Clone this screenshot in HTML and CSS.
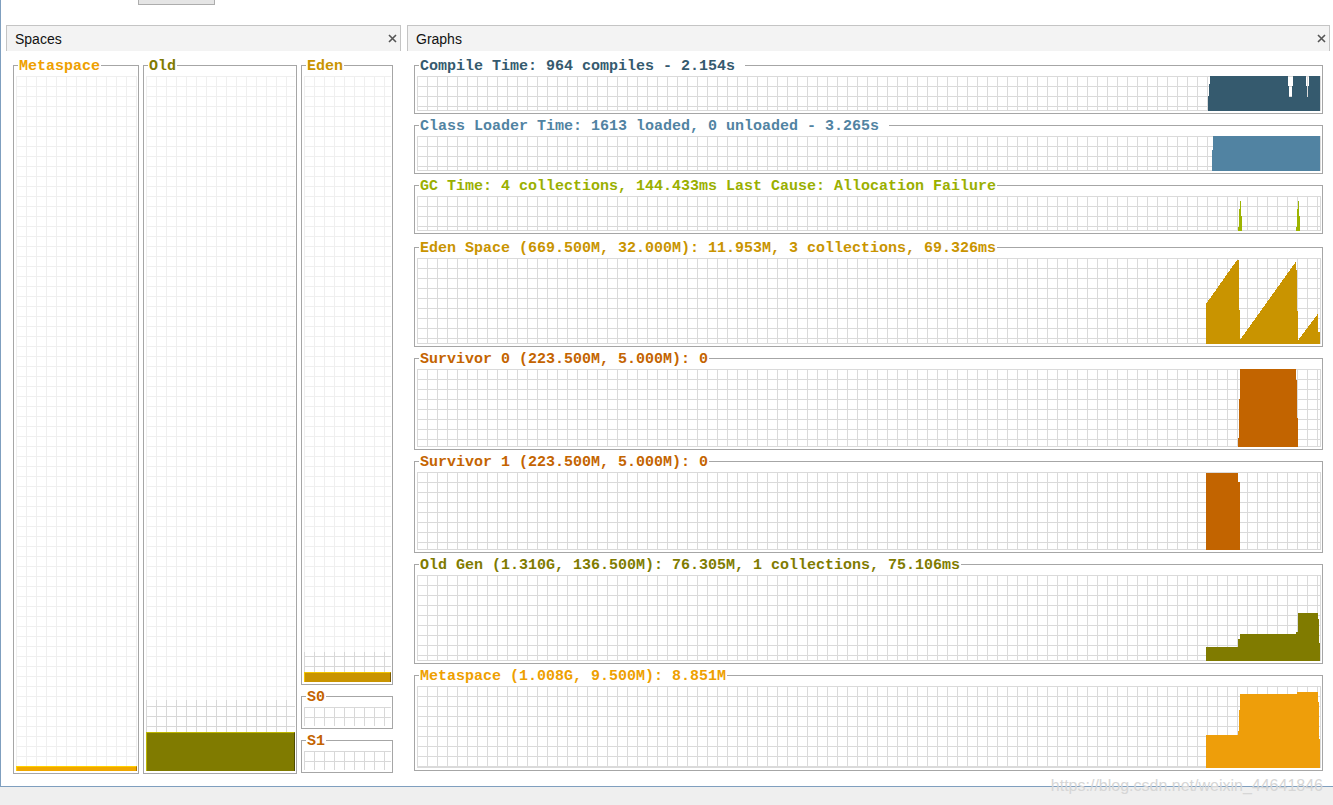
FILE: index.html
```html
<!DOCTYPE html>
<html>
<head>
<meta charset="utf-8">
<title>Visual GC</title>
<link rel="stylesheet" href="styles.css">
</head>
<body>
<div class="window">
  <div class="toolbar"><div class="tool-btn"></div></div>
  <div class="panels">
    <section class="panel panel-spaces">
      <header class="tab-head">
        <span class="tab-title">Spaces</span>
        <svg class="close" width="9" height="9" viewBox="0 0 9 9"><path d="M1 1L8 8M8 1L1 8" stroke="#555" stroke-width="1.6" fill="none"/></svg>
      </header>
      <div class="panel-body spaces-body">
        <fieldset class="box col-meta">
          <legend class="t-meta">Metaspace</legend>
          <div class="splot splot-tall" style="--commit:5px"><div class="used used-meta" style="height:5px"></div></div>
        </fieldset>
        <fieldset class="box col-old">
          <legend class="t-old">Old</legend>
          <div class="splot splot-tall" style="--commit:71px"><div class="used used-old" style="height:39px"></div></div>
        </fieldset>
        <div class="space-stack">
          <fieldset class="box">
            <legend class="t-eden">Eden</legend>
            <div class="splot splot-eden" style="--commit:30px"><div class="used used-eden" style="height:10px"></div></div>
          </fieldset>
          <fieldset class="box">
            <legend class="t-surv">S0</legend>
            <div class="splot splot-surv" style="--commit:100%"></div>
          </fieldset>
          <fieldset class="box">
            <legend class="t-surv">S1</legend>
            <div class="splot splot-surv" style="--commit:100%"></div>
          </fieldset>
        </div>
      </div>
    </section>

    <section class="panel panel-graphs">
      <header class="tab-head">
        <span class="tab-title">Graphs</span>
        <svg class="close" width="9" height="9" viewBox="0 0 9 9"><path d="M1 1L8 8M8 1L1 8" stroke="#555" stroke-width="1.6" fill="none"/></svg>
      </header>
      <div class="panel-body graphs-body">
        <fieldset class="box">
          <legend class="t-compile">Compile Time: 964 compiles - 2.154s </legend>
          <div class="gplot gp-35">
            <svg class="data" viewBox="0 0 904 35" preserveAspectRatio="none" shape-rendering="crispEdges"><polygon fill="#355a6e" points="791,35 791,20 792,20 792,8 793,8 793,0 871,0 871,10 872,10 872,21 875,21 875,10 876,10 876,0 889,0 889,10 890,10 890,21 891,21 891,10 892,10 892,0 903,0 903,35"/></svg>
          </div>
        </fieldset>
        <fieldset class="box">
          <legend class="t-class">Class Loader Time: 1613 loaded, 0 unloaded - 3.265s </legend>
          <div class="gplot gp-35">
            <svg class="data" viewBox="0 0 904 35" preserveAspectRatio="none" shape-rendering="crispEdges"><polygon fill="#5183a2" points="795,35 795,14 796,14 796,0 903,0 903,35"/></svg>
          </div>
        </fieldset>
        <fieldset class="box">
          <legend class="t-gc">GC Time: 4 collections, 144.433ms Last Cause: Allocation Failure</legend>
          <div class="gplot gp-35">
            <svg class="data" viewBox="0 0 904 35" preserveAspectRatio="none" shape-rendering="crispEdges">
              <polygon fill="#9db400" points="821,35 821,31 822,31 822,13 823,13 823,5 824,5 824,20 825,20 825,35"/>
              <polygon fill="#9db400" points="879,35 879,31 880,31 880,13 881,13 881,5 882,5 882,20 883,20 883,35"/>
            </svg>
          </div>
        </fieldset>
        <fieldset class="box graph-gap">
          <legend class="t-eden">Eden Space (669.500M, 32.000M): 11.953M, 3 collections, 69.326ms</legend>
          <div class="gplot gp-86">
            <svg class="data" viewBox="0 0 904 86" preserveAspectRatio="none" shape-rendering="crispEdges"><polygon fill="#c99400" points="789,86 789,46 820,2 822,2 822,52 823,52 823,82 878.7,4 878.7,12 879.7,12 879.7,53 881.3,53 881.3,82 900.7,56 900.7,74 902.5,74 902.5,86"/></svg>
          </div>
        </fieldset>
        <fieldset class="box">
          <legend class="t-surv">Survivor 0 (223.500M, 5.000M): 0</legend>
          <div class="gplot gp-78">
            <svg class="data" viewBox="0 0 904 78" preserveAspectRatio="none" shape-rendering="crispEdges"><polygon fill="#c26400" points="821,78 821,69 822,69 822,30 823,30 823,0 878.7,0 878.7,11 879.7,11 879.7,49 880.7,49 880.7,78"/></svg>
          </div>
        </fieldset>
        <fieldset class="box">
          <legend class="t-surv">Survivor 1 (223.500M, 5.000M): 0</legend>
          <div class="gplot gp-78">
            <svg class="data" viewBox="0 0 904 78" preserveAspectRatio="none" shape-rendering="crispEdges"><polygon fill="#c26400" points="789,78 789,1 821,1 821,10 823,10 823,78"/></svg>
          </div>
        </fieldset>
        <fieldset class="box">
          <legend class="t-old">Old Gen (1.310G, 136.500M): 76.305M, 1 collections, 75.106ms</legend>
          <div class="gplot gp-86">
            <svg class="data" viewBox="0 0 904 86" preserveAspectRatio="none" shape-rendering="crispEdges"><polygon fill="#807b00" points="789,86 789,72 821.3,72 821.3,64 823,64 823,59 879.3,59 879.3,57 880.7,57 880.7,38 900.7,38 900.7,44 902.3,44 902.3,68 903,68 903,86"/></svg>
          </div>
        </fieldset>
        <fieldset class="box">
          <legend class="t-meta">Metaspace (1.008G, 9.500M): 8.851M</legend>
          <div class="gplot gp-82">
            <svg class="data" viewBox="0 0 904 83" preserveAspectRatio="none" shape-rendering="crispEdges"><polygon fill="#ee9e0a" points="789,83 789,50 821.3,50 821.3,46 822.3,46 822.3,24 823,24 823,8 880.3,8 880.3,6 900.7,6 900.7,16 901.7,16 901.7,54 903,54 903,83"/></svg>
          </div>
        </fieldset>
      </div>
    </section>
  </div>
</div>
<div class="watermark">https://blog.csdn.net/weixin_44641846</div>
</body>
</html>
```

FILE: styles.css
```css
* { box-sizing: border-box; }

body {
  margin: 0;
  width: 1333px;
  height: 805px;
  overflow: hidden;
  position: relative;
  background: #efefef;
  font-family: "Liberation Sans", Arial, sans-serif;
}

.window {
  height: 787px;
  background: #fff;
  border-left: 1px solid #7f9fbf;
  border-bottom: 1px solid #7f9fbf;
}

.toolbar {
  height: 25px;
  padding-left: 137px;
}

.tool-btn {
  width: 77px;
  height: 5px;
  background: #e5e5e5;
  border: 1px solid #adadad;
  border-top: 0;
}

.panels {
  display: flex;
  gap: 6px;
  padding-left: 5px;
}

.panel-spaces { width: 395px; }
.panel-graphs { width: 923px; }

.tab-head {
  height: 26px;
  border: 1px solid #c4c4c4;
  border-bottom: 0;
  background: #f3f3f3;
  display: flex;
  align-items: center;
  justify-content: space-between;
  padding: 0 3px 0 8px;
}

.tab-title {
  font-size: 14px;
  color: #111;
}

.close { display: block; }

.panel-body { padding: 6px 7px 0 7px; }
.spaces-body {
  display: flex;
  gap: 4px;
  padding-right: 8px;
}
.graphs-body {
  display: flex;
  flex-direction: column;
  gap: 3px;
}

.col-meta { width: 126px; }
.col-old { width: 154px; }
.space-stack {
  flex: 1;
  display: flex;
  flex-direction: column;
  gap: 3px;
}

fieldset.box {
  margin: 0;
  padding: 0 1px 2px 2px;
  border: 1px solid #a6a6a6;
  min-width: 0;
}

fieldset.graph-gap { margin-top: 2px; }

legend {
  margin-left: 2px;
  padding: 4px 1px 0;
  font: bold 15px/12px "Liberation Mono", "Courier New", monospace;
  white-space: pre;
}

.t-compile { color: #355a6e; }
.t-class { color: #5183a2; }
.t-gc { color: #9aaf00; }
.t-eden { color: #c99400; }
.t-surv { color: #c46400; }
.t-old { color: #807b00; }
.t-meta { color: #eea000; }

/* Spaces plots */
.splot {
  margin-top: 3px;
  display: flex;
  flex-direction: column;
  justify-content: flex-end;
  background:
    linear-gradient(rgba(255,255,255,.6), rgba(255,255,255,.6)) top / 100% calc(100% - var(--commit, 0px)) no-repeat,
    linear-gradient(to right, #d8d8d8 1px, transparent 1px) 0 0 / 10px 10px,
    linear-gradient(to bottom, #d8d8d8 1px, transparent 1px) 0 0 / 10px 10px;
}
.splot-tall { height: 695px; }
.splot-eden { height: 606px; }
.splot-surv { height: 19px; }

.used { width: 100%; }
.used-meta {
  background: #f0a800;
  border-top: 1px solid #ffd000;
  border-left: 1px solid #ffd000;
  border-right: 1px solid #a87400;
}
.used-old {
  background: #807b00;
  border-top: 1px solid #bdb600;
  border-left: 1px solid #bdb600;
  border-right: 1px solid #4f4b00;
}
.used-eden {
  background: #c99400;
  border-top: 1px solid #f2c400;
  border-left: 1px solid #f2c400;
  border-right: 1px solid #7d5c00;
}

/* Graph plots */
.gplot {
  margin-top: 3px;
  background:
    linear-gradient(to left, #dadada 1px, transparent 1px) no-repeat,
    linear-gradient(to top, #dadada 1px, transparent 1px) no-repeat,
    linear-gradient(to right, #dadada 1px, transparent 1px) 0 0 / 10px 10px,
    linear-gradient(to bottom, #dadada 1px, transparent 1px) 0 0 / 10px 10px;
}
.gp-35 { height: 35px; }
.gp-78 { height: 78px; }
.gp-82 { height: 82px; }
.gp-86 { height: 86px; }

.data {
  display: block;
  width: 100%;
  height: 100%;
}

.watermark {
  position: absolute;
  right: 10px;
  top: 777px;
  font-size: 16px;
  color: #d6d6d6;
  white-space: nowrap;
}
```
